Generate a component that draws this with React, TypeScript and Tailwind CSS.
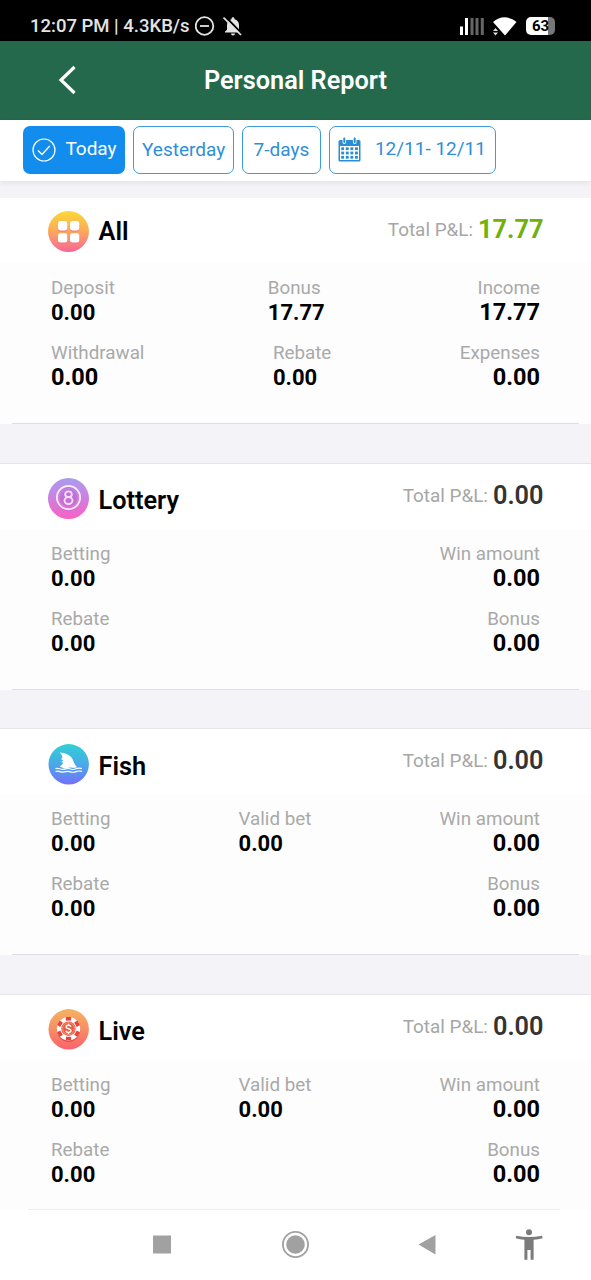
import React from "react";

function AllIcon() {
  return (
    <svg width="41" height="41" viewBox="0 0 41 41">
      <defs>
        <linearGradient id="all" x1="0" y1="0" x2="0" y2="1">
          <stop offset="0" stopColor="#fcd935" />
          <stop offset="0.5" stopColor="#fba85c" />
          <stop offset="1" stopColor="#f7669a" />
        </linearGradient>
      </defs>
      <circle cx="20.5" cy="20.5" r="20.5" fill="url(#all)" />
      <g fill="#e8757f" opacity="0.7">
        <rect x="10" y="11.5" width="9.3" height="9.2" rx="2.4" />
        <rect x="22" y="11.5" width="9.3" height="9.2" rx="2.4" />
        <rect x="10" y="23.5" width="9.3" height="9.2" rx="2.4" />
        <rect x="22" y="23.5" width="9.3" height="9.2" rx="2.4" />
      </g>
      <g fill="#fff">
        <rect x="10" y="10" width="9.3" height="9.4" rx="2.4" />
        <rect x="22" y="10" width="9.3" height="9.4" rx="2.4" />
        <rect x="10" y="22.2" width="9.3" height="9.4" rx="2.4" />
        <rect x="22" y="22.2" width="9.3" height="9.4" rx="2.4" />
      </g>
    </svg>
  );
}

function LotteryIcon() {
  return (
    <svg width="41" height="41" viewBox="0 0 41 41">
      <defs>
        <linearGradient id="lottery" x1="0" y1="0" x2="0" y2="1">
          <stop offset="0" stopColor="#a99cf0" />
          <stop offset="0.5" stopColor="#ce80df" />
          <stop offset="1" stopColor="#fb5fc4" />
        </linearGradient>
      </defs>
      <circle cx="20.5" cy="20.5" r="20.5" fill="url(#lottery)" />
      <circle cx="20.5" cy="20.6" r="11.6" fill="none" stroke="#b45ccb" strokeWidth="1.8" opacity="0.6" />
      <circle cx="20.5" cy="19.6" r="8.8" fill="#b960ce" opacity="0.5" />
      <circle cx="20.5" cy="19.6" r="11.6" fill="none" stroke="#fdeafe" strokeWidth="1.9" />
      <g fill="none" stroke="#fbe3fd" strokeWidth="1.8">
        <ellipse cx="20.5" cy="16.2" rx="3.3" ry="2.9" />
        <ellipse cx="20.5" cy="22.6" rx="4" ry="3.4" />
      </g>
    </svg>
  );
}

function FishIcon() {
  return (
    <svg width="41" height="41" viewBox="0 0 41 41">
      <defs>
        <linearGradient id="fish" x1="0" y1="0" x2="0" y2="1">
          <stop offset="0" stopColor="#2fd0d3" />
          <stop offset="0.5" stopColor="#4aa9e8" />
          <stop offset="1" stopColor="#7470fb" />
        </linearGradient>
      </defs>
      <circle cx="20.7" cy="20.3" r="20.2" fill="url(#fish)" />
      <path
        d="M11.8 8.5C17 9 21 10.500 23.500 13.500c2.300 2.800 2.200 6.800 5.500 9.500-2.300 1.600-4.600.4-6.700.5-2.800.1-4.300 1.400-7.300.5-1.300-.4-2.300-1-3.200-.9 1-1.700 3.200-2.800 3.600-4.300l-2.300-.7 2.300-1.600-2.300-1.300 1.300-1.600C14.300 11.500 13.200 10 11.800 8.500Z"
        fill="#fff"
      />
      <g fill="none" stroke="#fff" strokeWidth="1.2">
        <path d="M7.500 24.600c3-1.200 4.500 1 7.500.8s4-1.600 6.500-.6 4.500.9 6.500 0 4-.8 6-.3" />
        <path d="M7.500 27.500c3-1.200 4.500.8 7.500.6s4-1.400 6.500-.5 4.500.9 6.500 0 4-.7 6-.2" />
      </g>
    </svg>
  );
}

function LiveIcon() {
  return (
    <svg width="41" height="41" viewBox="0 0 41 41">
      <defs>
        <linearGradient id="live" x1="0" y1="0" x2="0" y2="1">
          <stop offset="0" stopColor="#f5b35f" />
          <stop offset="0.5" stopColor="#f88d65" />
          <stop offset="1" stopColor="#fb626c" />
        </linearGradient>
      </defs>
      <circle cx="20.7" cy="20.3" r="20.2" fill="url(#live)" />
      <circle cx="20.5" cy="21.3" r="11.7" fill="#dc4141" opacity="0.7" />
      <circle cx="20.5" cy="19.7" r="11.7" fill="#fff" />
      {[0, 60, 120, 180, 240, 300].map((angle) => (
        <rect key={angle} x="17.9" y="8" width="5.2" height="3.6" fill="#e8413c" transform={`rotate(${angle} 20.5 19.7)`} />
      ))}
      <circle cx="20.5" cy="19.7" r="7.2" fill="#ef5b3e" />
      <circle cx="20.5" cy="19.7" r="6" fill="none" stroke="#f9b49b" strokeWidth="0.6" />
      <path d="M23 17.700c-.4-1-1.300-1.500-2.500-1.500-1.500 0-2.400.7-2.400 1.700 0 2.500 4.900 1.100 4.900 3.700 0 1.100-1 1.800-2.500 1.800-1.400 0-2.300-.6-2.600-1.700M20.500 14.700v1.500M20.500 23.400v1.500" fill="none" stroke="#fff" strokeWidth="1.4" />
    </svg>
  );
}

type Item = { label: string; value: string; large?: boolean };

const deposit: Item = { label: "Deposit", value: "0.00" };
const betting: Item = { label: "Betting", value: "0.00" };
const rebate: Item = { label: "Rebate", value: "0.00" };
const validBet: Item = { label: "Valid bet", value: "0.00" };
const winAmount: Item = { label: "Win amount", value: "0.00" };
const bonus: Item = { label: "Bonus", value: "0.00" };

const sections = [
  {
    name: "All",
    icon: <AllIcon />,
    total: "17.77",
    headClass: "flex pt-[13px]",
    nameClass: "pt-[5px]",
    rows: [
      [deposit, { label: "Bonus", value: "17.77" }, { label: "Income", value: "17.77" }],
      [{ label: "Withdrawal", value: "0.00", large: true }, rebate, { label: "Expenses", value: "0.00" }],
    ] as Item[][],
  },
  { name: "Lottery", icon: <LotteryIcon />, total: "0.00", headClass: "flex pt-[14px]", nameClass: "pt-[7px]", rows: [[betting, winAmount], [rebate, bonus]] as Item[][] },
  { name: "Fish", icon: <FishIcon />, total: "0.00", headClass: "flex pt-[14.5px]", nameClass: "pt-[7px]", rows: [[betting, validBet, winAmount], [rebate, bonus]] as Item[][] },
  { name: "Live", icon: <LiveIcon />, total: "0.00", headClass: "flex pt-[14px]", nameClass: "pt-[7px]", rows: [[betting, validBet, winAmount], [rebate, bonus]] as Item[][] },
];

function Section({ section }: { section: (typeof sections)[number] }) {
  return (
    <section className="h-[265.4px] shrink-0">
      <div className="h-[226px] bg-[#fdfdfd]">
        <div className="flex h-[65px] justify-between bg-white pr-[47.5px] pl-12">
          <div className={section.headClass}>
            {section.icon}
            <h2 className={`ml-[9.5px] text-[25.3px] leading-[32px] font-semibold ${section.nameClass}`}>{section.name}</h2>
          </div>
          <div className="flex pt-4 leading-[32px]">
            <span className="text-[18.9px] text-[#a6a6a6]">Total P&amp;L:</span>
            <span className={section.total === "0.00" ? "ml-[5px] text-[25.3px] font-semibold text-[#333]" : "ml-[5px] text-[25.3px] font-bold text-[#72b00d]"}>
              {section.total}
            </span>
          </div>
        </div>
        <div className="flex flex-col gap-[17px] pt-[13px] pr-[51px] pl-[51px]">
          {section.rows.map((row, i) => (
            <div key={i} className="flex justify-between">
              {row.map((item, j) => {
                const last = j === row.length - 1;
                return (
                  <div key={item.label} className={last ? "text-right" : ""}>
                    <div className="text-[18.8px] leading-6 text-[#a9a9a9]">{item.label}</div>
                    <div className={last || item.large ? "pt-px text-[23.5px] leading-[23px] font-bold" : "pt-px text-[22px] leading-[23px] font-bold"}>
                      {item.value}
                    </div>
                  </div>
                );
              })}
            </div>
          ))}
        </div>
        <div className="mx-3 mt-[34px] h-px bg-[#dedee0]" />
      </div>
      <div className="h-[39.4px] border-b border-[#e6e6ea] bg-[#f3f3f8]" />
    </section>
  );
}

function StatusBar() {
  return (
    <div className="flex h-[41px] shrink-0 items-center justify-between bg-black pt-[11px] pr-[36px] pl-[30px] text-[#e4e4e4]">
      <div className="flex items-center">
        <span className="text-[18.5px] leading-6 font-medium">12:07 PM | 4.3KB/s</span>
        <svg className="ml-[5px]" width="20" height="20" viewBox="0 0 20 20" fill="none" stroke="currentColor" strokeWidth="1.8">
          <circle cx="9.5" cy="10" r="8.8" />
          <path d="M5 10h9" />
        </svg>
        <svg className="ml-[8px]" width="20" height="20" viewBox="0 0 20 20">
          <path d="M10 1.200c-.9 0-1.500.6-1.500 1.500v.5C5.600 4 4 6.300 4 9v4.700l-2 1.800v1h16v-1l-2-1.800V9c0-2.700-1.600-5-4.500-5.800v-.5c0-.9-.6-1.500-1.500-1.500ZM8 17.500a2 2 0 0 0 4 0Z" fill="currentColor" />
          <path d="M2.500.8l17 17.500" stroke="#000" strokeWidth="2" />
          <path d="M.5 1.500l17.500 17.500" stroke="#e4e4e4" strokeWidth="1.7" />
        </svg>
      </div>
      <div className="flex items-center">
        <svg width="25" height="19" viewBox="0 0 25 19">
          <path d="M0 9.500h3V18H0zM5 1h3v17H5z" fill="#fff" />
          <path d="M10.500 1h3v17h-3zM15.500 1h3v17h-3zM20.800 1h3v17h-3z" fill="#666" />
        </svg>
        <svg className="ml-[8px]" width="24" height="19" viewBox="0 0 24 19">
          <path d="M0 5C7-1.300 16-1.300 23.500 5L12 18.500Z" fill="#fff" />
          <circle cx="2.500" cy="15" r="4.3" fill="#000" />
          <path d="M0 14l2.500-3L5 14zM0 15.500h5l-2.500 3z" fill="#ddd" />
        </svg>
        <div className="ml-[9px] flex h-[18px] w-[29px] items-center justify-center rounded-[5px] bg-linear-to-r from-white from-75% to-[#777] to-75% text-[15px] leading-none font-bold text-black">
          63
        </div>
      </div>
    </div>
  );
}

function Filters() {
  const box = "flex h-12 items-center rounded-[7px] border border-[#3c9bdc] text-[19px] text-[#2d8fd8]";
  return (
    <div className="relative flex h-[61px] shrink-0 gap-2 bg-white pt-[5.5px] pl-[23.4px] shadow-[0_2px_5px_rgba(0,0,0,0.07)]">
      <div className="flex h-12 w-[102px] items-center rounded-[7px] bg-[#128ced] pl-[9px] text-[19px] text-white">
        <svg className="mr-[9px]" width="24" height="24" viewBox="0 0 24 24" fill="none" stroke="#fff" strokeWidth="1.2">
          <circle cx="12" cy="12" r="11" />
          <path d="M6 12.500l4 3.900 7.700-8.300" strokeWidth="1.4" />
        </svg>
        <span className="pb-px">Today</span>
      </div>
      <div className={`${box} w-[100.5px] justify-center pt-px`}>Yesterday</div>
      <div className={`${box} w-[79px] justify-center pt-px`}>7-days</div>
      <div className={`${box} w-[167px] pl-2`}>
        <svg className="mr-[14px]" width="23" height="25" viewBox="0 0 23 25" fill="#2b8cd6">
          <path d="M2 3h2.500v2.200a1.800 1.800 0 0 0 3.600 0V3h6.800v2.200a1.800 1.800 0 0 0 3.600 0V3H21a1.500 1.500 0 0 1 1.500 1.500V23a1.500 1.500 0 0 1-1.500 1.500H2A1.500 1.500 0 0 1 .5 23V4.500A1.500 1.500 0 0 1 2 3Z" />
          <rect x="2" y="9" width="19" height="14" fill="#fff" />
          <rect x="5.300" y=".5" width="2" height="5.500" rx="1" />
          <rect x="15.700" y=".5" width="2" height="5.500" rx="1" />
          {[10.3, 14.6, 18.9].map((y) => [3.2, 7.8, 12.4, 17].map((x) => <rect key={`${x}-${y}`} x={x} y={y} width="2.9" height="2.8" />))}
        </svg>
        <span className="pb-px">12/11- 12/11</span>
      </div>
    </div>
  );
}

function NavBar() {
  return (
    <div className="h-[71px] shrink-0 bg-white">
      <div className="mr-[31px] ml-7 h-px bg-[#eee]" />
      <svg width="591" height="70" viewBox="0 0 591 70" fill="#a1a1a1">
        <rect x="153" y="25.500" width="18" height="18" />
        <circle cx="295.500" cy="34.500" r="12.600" fill="none" stroke="#a1a1a1" strokeWidth="1.8" />
        <circle cx="295.500" cy="34.500" r="9.300" />
        <path d="M418.500 34.500 435.500 25v19.500Z" />
        <g fill="#7b7b7b">
          <circle cx="529" cy="22.300" r="3" />
          <path d="M516.300 25.700q12.700 2.600 25.700 0l.6 2.600q-4.300 1-9 1.500v19.900h-3V40h-3.200v9.700h-3V29.800q-4.500-.5-8.700-1.500Z" />
        </g>
      </svg>
    </div>
  );
}

export default function App() {
  return (
    <div className="flex h-[1280px] w-[591px] flex-col overflow-hidden bg-[#f3f3f8] font-[Roboto,sans-serif] text-black">
      <StatusBar />
      <header className="relative flex h-[79px] shrink-0 items-center justify-center bg-[#24694c] pt-px text-white">
        <svg className="absolute top-6 left-[57px]" width="20" height="30" viewBox="0 0 20 30" fill="none" stroke="#fff" strokeWidth="3.2">
          <path d="M17.500 2 4 15l13.500 13" />
        </svg>
        <h1 className="text-[25.3px] font-semibold">Personal Report</h1>
      </header>
      <Filters />
      <main className="min-h-0 flex-1 overflow-hidden pt-[17.4px]">
        {sections.map((section) => (
          <Section key={section.name} section={section} />
        ))}
      </main>
      <NavBar />
    </div>
  );
}
